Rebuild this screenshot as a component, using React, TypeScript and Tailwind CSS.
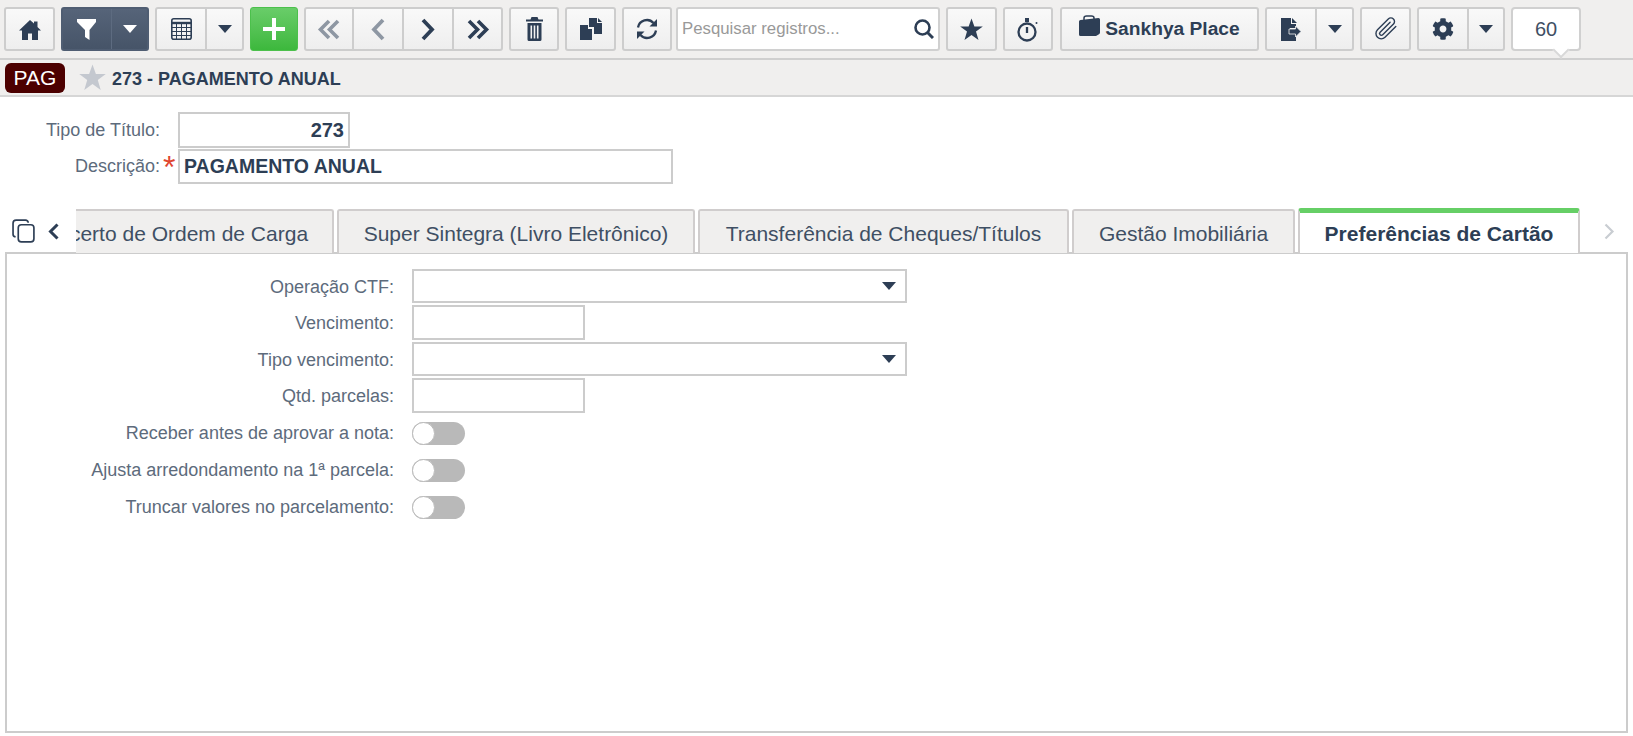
import type { ReactNode } from 'react';
import { FaCog } from 'react-icons/fa';

const ink = 'text-[#2d3e55]';
const btn = 'flex items-center justify-center border-2 border-[#cdcdcd] rounded-[3px] bg-gradient-to-b from-[#f9f9f9] to-[#eeeeee]';

function Caret({ color = '#2d3e55' }: { color?: string }) {
  return (
    <svg width="14" height="8" viewBox="0 0 14 8">
      <path d="M0 0h14L7 8z" fill={color} />
    </svg>
  );
}

function Chevron({ dir, color, double }: { dir: 'left' | 'right'; color: string; double?: boolean }) {
  const single = dir === 'left' ? 'M13 2 4 11.500 13 21' : 'M3 2l9 9.500L3 21';
  const d =
    dir === 'left'
      ? 'M12 2 3.500 10.500 12 19M21 2l-8.500 8.500L21 19'
      : 'M3 2l8.500 8.500L3 19M12 2l8.500 8.500L12 19';
  return double ? (
    <svg width="24" height="21" viewBox="0 0 24 21" fill="none" stroke={color} strokeWidth="3.600">
      <path d={d} />
    </svg>
  ) : (
    <svg width="16" height="23" viewBox="0 0 16 23" fill="none" stroke={color} strokeWidth="3.800">
      <path d={single} />
    </svg>
  );
}

function Star({ size, color }: { size: number; color: string }) {
  return (
    <svg width={size} height={size} viewBox="0 0 24 24">
      <path d="M12 0.500 15 8.800H23.800L16.700 14.200 19.300 23 12 17.700 4.700 23 7.300 14.200 0.200 8.800H9z" fill={color} />
    </svg>
  );
}

function IconBtn({ w, children }: { w: string; children: ReactNode }) {
  return <div className={`${btn} ${w} h-[44px] ${ink}`}>{children}</div>;
}

function SplitBtn({ left, w, leftW }: { left: ReactNode; w: string; leftW: string }) {
  return (
    <div className={`${btn} ${w} h-[44px] ${ink} !justify-start`}>
      <div className={`${leftW} h-full flex items-center justify-center border-r-2 border-[#cdcdcd]`}>{left}</div>
      <div className="flex-1 flex items-center justify-center">
        <Caret />
      </div>
    </div>
  );
}

function Toolbar() {
  return (
    <div className="h-[60px] shrink-0 bg-[#f0efee] border-b-2 border-[#cfcfcf] pl-[4px] pt-[7px] flex gap-[6px] relative">
      <IconBtn w="w-[51px]">
        <svg width="22" height="21" viewBox="0 0 22 21">
          <path d="M11 1 0 11.500h3V21h6v-6.500h4V21h6v-9.500h3L18.500 8V2.500h-3.500v2z" fill="#2d3e55" />
        </svg>
      </IconBtn>
      <div className="w-[88px] h-[44px] rounded-[3px] flex bg-gradient-to-b from-[#566479] to-[#465468] border-2 border-[#4f5d72]">
        <div className="w-[49px] flex items-center justify-center border-r border-[#5d6b80]">
          <svg width="20" height="23" viewBox="0 0 20 23">
            <path d="M0 1h19v3l-6.500 8v10L8 19v-7L0 4z" fill="#fff" />
          </svg>
        </div>
        <div className="flex-1 flex items-center justify-center">
          <Caret color="#fff" />
        </div>
      </div>
      <SplitBtn
        w="w-[89px]"
        leftW="w-[50px]"
        left={
          <svg width="21" height="22" viewBox="0 0 21 22" fill="none" stroke="#2d3e55" strokeWidth="1">
            <rect x="0.800" y="0.800" width="19.400" height="20.400" rx="2" strokeWidth="1.600" />
            <path d="M1 5h19" strokeWidth="2.400" />
            <path d="M1 9.500h19M1 13.500h19M1 17.500h19M5.500 6v15M10.500 6v15M15.500 6v15" />
          </svg>
        }
      />
      <div className="w-[48px] h-[44px] rounded-[3px] flex items-center justify-center bg-gradient-to-b from-[#69cd69] to-[#3cb83c] border border-[#4cc04c]">
        <svg width="22" height="22" viewBox="0 0 22 22">
          <path d="M9 0h4v9h9v4h-9v9H9v-9H0V9h9z" fill="#fff" />
        </svg>
      </div>
      <div className={`${btn} w-[199px] h-[44px] !justify-start`}>
        <div className="w-[48px] h-full flex items-center justify-center border-r-2 border-[#cdcdcd]">
          <Chevron dir="left" color="#8e97a3" double />
        </div>
        <div className="w-[50px] h-full flex items-center justify-center border-r-2 border-[#cdcdcd]">
          <Chevron dir="left" color="#8e97a3" />
        </div>
        <div className="w-[50px] h-full flex items-center justify-center border-r-2 border-[#cdcdcd]">
          <Chevron dir="right" color="#2d3e55" />
        </div>
        <div className="flex-1 flex items-center justify-center">
          <Chevron dir="right" color="#2d3e55" double />
        </div>
      </div>
      <IconBtn w="w-[50px]">
        <svg width="17" height="24" viewBox="0 0 17 24">
          <path
            d="M5.500 0h6l1 2.500H17v2H0v-2h4.500zM1.500 6h14v16.500a1.500 1.500 0 0 1-1.500 1.500H3a1.500 1.500 0 0 1-1.500-1.500zM4.500 8.500v13h1.600v-13zM7.700 8.500v13h1.600v-13zM10.900 8.500v13h1.600v-13z"
            fill="#2d3e55"
            fillRule="evenodd"
          />
        </svg>
      </IconBtn>
      <IconBtn w="w-[51px]">
        <svg width="22" height="22" viewBox="0 0 22 22">
          <path d="M0 7h8v4h4v11H0z" fill="#2d3e55" />
          <path d="M9 9V0h8v5h5v11h-8V9zM18 0l4 4h-4z" fill="#2d3e55" />
        </svg>
      </IconBtn>
      <IconBtn w="w-[50px]">
        <svg width="22" height="24" viewBox="0 0 22 24" fill="none" stroke="#2d3e55" strokeWidth="2.300">
          <path d="M2 10.500A9 9 0 0 1 17.500 6" />
          <path d="M20 13.500A9 9 0 0 1 4.500 18" />
          <path d="M21 2v7.500h-7.500z" fill="#2d3e55" stroke="none" />
          <path d="M1 22v-7.500h7.500z" fill="#2d3e55" stroke="none" />
        </svg>
      </IconBtn>
      <div className="w-[264px] h-[44px] -ml-[2px] bg-white border-2 border-[#d0d0d0] rounded-[3px] flex items-center justify-between pl-[4px] pr-[4px]">
        <span className="text-[16.800px] text-[#999999]">Pesquisar registros...</span>
        <svg width="20" height="20" viewBox="0 0 20 20" fill="none" stroke="#2d3e55">
          <circle cx="8.500" cy="8.500" r="7" strokeWidth="2.600" />
          <path d="M13.500 13.500 19 19" strokeWidth="3" />
        </svg>
      </div>
      <IconBtn w="w-[51px]">
        <Star size={23} color="#2d3e55" />
      </IconBtn>
      <IconBtn w="w-[50px]">
        <svg width="22" height="25" viewBox="0 0 22 25" fill="none" stroke="#2d3e55">
          <circle cx="10" cy="15" r="8.500" strokeWidth="2.300" />
          <path d="M10 10v6" strokeWidth="2.300" />
          <path d="M8 1h4v4H8z" fill="#2d3e55" stroke="none" />
          <circle cx="19.500" cy="6" r="1" fill="#2d3e55" stroke="none" />
        </svg>
      </IconBtn>
      <div className={`${btn} w-[199px] h-[44px] gap-[5px] ml-[1px] ${ink}`}>
        <svg width="21" height="22" viewBox="0 0 21 22" className="-mt-[7px]">
          <path d="M5 5V3C5 1.500 6 1 7.500 1h5C14 1 15 1.500 15 3v1" fill="none" stroke="#2d3e55" strokeWidth="1.500" />
          <path d="M1.500 5 19.500 3A1.500 1.500 0 0 1 21 4.500v13a2 2 0 0 1-1 1.700L17 21H1.500A1.500 1.500 0 0 1 0 19.500v-13A1.500 1.500 0 0 1 1.500 5z" fill="#2d3e55" />
        </svg>
        <span className="font-bold text-[19.200px]">Sankhya Place</span>
      </div>
      <SplitBtn
        w="w-[89px]"
        leftW="w-[50px]"
        left={
          <svg width="20" height="23" viewBox="0 0 20 23">
            <path d="M0 0h10v6h5v4H9v5h6v8H0z" fill="#2d3e55" />
            <path d="M11 0l5 5h-5z" fill="#2d3e55" />
            <path d="M8 11h6.500V8l5.500 5.500-5.500 5.500v-3H8z" fill="#2d3e55" stroke="#f3f3f3" strokeWidth="0.800" />
          </svg>
        }
      />
      <IconBtn w="w-[51px]">
        <svg width="24" height="24" viewBox="0 0 24 24" fill="none" stroke="#2d3e55" strokeWidth="1.400" strokeLinecap="round" strokeLinejoin="round">
          <path d="M21.800 9.500 11 20.300a5.300 5.300 0 0 1-7.500-7.500L14.300 2A3.600 3.600 0 0 1 19.500 7L8.700 17.800a1.800 1.800 0 0 1-2.600-2.600l10-10" />
        </svg>
      </IconBtn>
      <SplitBtn w="w-[88px]" leftW="w-[50px]" left={<FaCog size={22} />} />
      <div className="w-[70px] h-[44px] bg-white border-2 border-[#d0d0d0] rounded-[4px] flex items-center justify-center text-[20px] text-[#3f4f64] relative">
        60
        <div className="absolute left-[42px] -bottom-[7px] w-[12px] h-[12px] bg-white border-r-2 border-b-2 border-[#d8d8d8] rotate-45" />
      </div>
    </div>
  );
}

function TitleBar() {
  return (
    <div className="h-[37px] shrink-0 bg-[#f0efee] border-b-2 border-[#d6d6d6] flex items-center pl-[5px]">
      <div className="w-[60px] h-[30px] bg-[#4c0000] rounded-[6px] text-white text-[21px] pt-[1px] flex items-center justify-center">PAG</div>
      <div className="ml-[14px]">
        <Star size={27} color="#c4c8cf" />
      </div>
      <span className={`ml-[6px] pt-[3px] font-bold text-[18px] ${ink}`}>273 - PAGAMENTO ANUAL</span>
    </div>
  );
}

function Header() {
  return (
    <div className="h-[111px] shrink-0 pt-[15px] pl-[178px] flex flex-col gap-[1px] relative">
      <div className="flex items-center h-[36px]">
        <span className="w-[160px] -ml-[178px] text-right text-[18px] text-[#5d6b7c] mr-[18px]">Tipo de Título:</span>
        <div className={`w-[172px] h-[36px] border-2 border-[#cccccc] text-right pr-[4px] font-bold text-[20px] leading-[32px] ${ink}`}>273</div>
      </div>
      <div className="flex items-center h-[35px]">
        <span className="w-[160px] -ml-[178px] text-right text-[18px] text-[#5d6b7c] mr-[18px]">Descrição:</span>
        <div className={`w-[495px] h-[35px] border-2 border-[#cccccc] pl-[4px] font-bold text-[19.500px] leading-[31px] ${ink}`}>PAGAMENTO ANUAL</div>
        <span className="absolute left-[163px] top-[54px] text-[#e0452f] text-[32px] leading-[32px]">*</span>
      </div>
    </div>
  );
}

const tabs = [
  { label: 'Acerto de Ordem de Carga', w: 'w-[304px] -ml-[46px]' },
  { label: 'Super Sintegra (Livro Eletrônico)', w: 'w-[358px]' },
  { label: 'Transferência de Cheques/Títulos', w: 'w-[371px]' },
  { label: 'Gestão Imobiliária', w: 'w-[223px]' },
];

function Tabs() {
  return (
    <div className="h-[45px] shrink-0 flex items-end relative z-10 -mb-[1px]">
      <div className="w-[76px] h-[44px] shrink-0 flex items-center pl-[12px] gap-[12px] text-[#2d3e55]">
        <svg width="24" height="24" viewBox="0 0 23 23" fill="none" stroke="#2d3e55" strokeWidth="1.600">
          <rect x="6" y="5.500" width="15" height="16.500" rx="3" />
          <path d="M3.500 17A2.500 2.500 0 0 1 1 14.500V4a3 3 0 0 1 3-3h9a2.500 2.500 0 0 1 2.500 2.500" />
        </svg>
        <svg width="11" height="17" viewBox="0 0 11 17" fill="none" stroke="#2d3e55" strokeWidth="3">
          <path d="M9.500 1.500 2.500 8.500l7 7" />
        </svg>
      </div>
      <div className="w-[1507px] h-[45px] shrink-0 overflow-hidden flex items-end gap-[3px]">
        {tabs.map(t => (
          <div
            key={t.label}
            className={`${t.w} h-[44px] pt-[3px] shrink-0 bg-[#f0efee] border-2 border-b-0 border-[#d0cdcd] rounded-t-[3px] flex items-center justify-center text-[21px] text-[#3f4f64]`}
          >
            {t.label}
          </div>
        ))}
        <div className={`w-[282px] h-[45px] pt-[1px] shrink-0 bg-white border-r-2 border-l-2 border-[#d0cdcd] border-t-[5px] !border-t-[#66cf66] rounded-t-[3px] flex items-center justify-center font-bold text-[21px] ${ink}`}>
          Preferências de Cartão
        </div>
      </div>
      <div className="flex-1 h-[44px] flex items-center pl-[21px]">
        <svg width="11" height="17" viewBox="0 0 11 17" fill="none" stroke="#c9cdd2" strokeWidth="2.200">
          <path d="M1.500 1.500 8.500 8.500l-7 7" />
        </svg>
      </div>
    </div>
  );
}

function Field({ label, nudge, children }: { label: string; nudge?: boolean; children: ReactNode }) {
  return (
    <div className="flex items-center gap-[18px]">
      <span className={`w-[387px] text-right text-[18px] text-[#5d6b7c] ${nudge ? 'pt-[2px]' : ''}`}>{label}</span>
      {children}
    </div>
  );
}

function Select() {
  return (
    <div className="w-[495px] h-[34px] border-2 border-[#cccccc] flex items-center justify-end pr-[9px]">
      <Caret />
    </div>
  );
}

function TextBox() {
  return <div className="w-[173px] h-[35px] border-2 border-[#cccccc]" />;
}

function Toggle() {
  return (
    <div className="w-[53px] h-[23px] rounded-full bg-[#b9b9b9] flex items-center">
      <div className="w-[23px] h-[23px] rounded-full bg-white border border-[#bbbbbb]" />
    </div>
  );
}

function Panel() {
  return (
    <div className="ml-[5px] mr-[5px] h-[481px] border-2 border-[#cccccc] pt-[15px] flex flex-col gap-[2px]">
      <Field nudge label="Operação CTF:"><Select /></Field>
      <Field nudge label="Vencimento:"><TextBox /></Field>
      <Field nudge label="Tipo vencimento:"><Select /></Field>
      <Field nudge label="Qtd. parcelas:"><TextBox /></Field>
      <div className="flex flex-col gap-[10px] pt-[5px]">
        <Field label="Receber antes de aprovar a nota:"><Toggle /></Field>
        <Field label="Ajusta arredondamento na 1ª parcela:"><Toggle /></Field>
        <Field label="Truncar valores no parcelamento:"><Toggle /></Field>
      </div>
    </div>
  );
}

export default function App() {
  return (
    <div className="w-[1633px] h-[736px] overflow-hidden bg-white flex flex-col font-['Liberation_Sans',Arial,sans-serif]">
      <Toolbar />
      <TitleBar />
      <Header />
      <Tabs />
      <Panel />
    </div>
  );
}
